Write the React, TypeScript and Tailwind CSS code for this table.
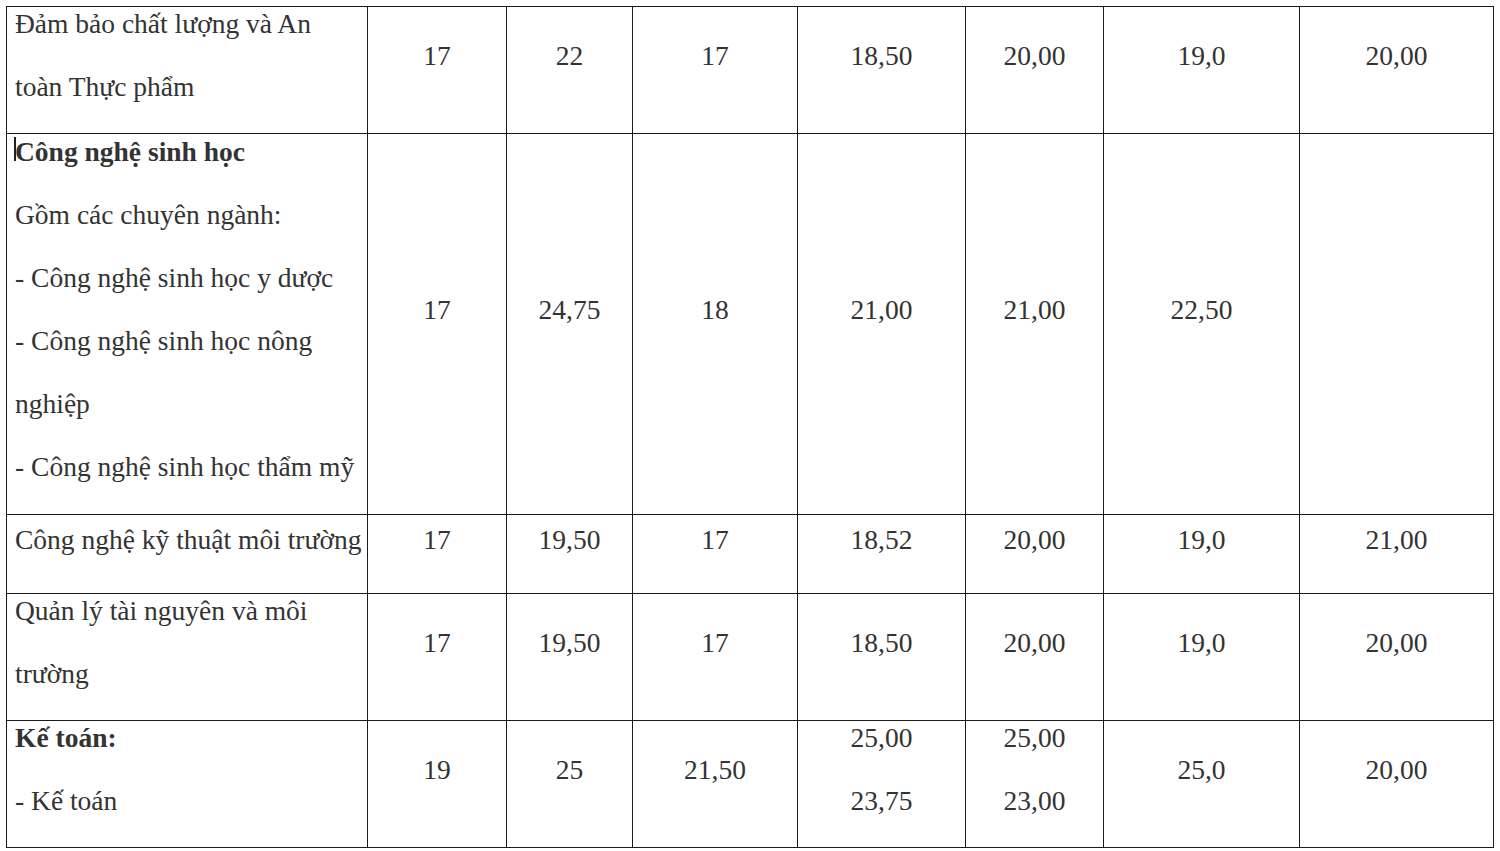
import React from "react";

type Row = {
  h: string;
  label: React.ReactNode;
  cells: React.ReactNode[];
};

const P = ({ children, bold }: { children: React.ReactNode; bold?: boolean }) => (
  <p className={`m-0 mb-[30px] h-[33px] leading-[33px] ${bold ? "font-bold" : ""}`}>{children}</p>
);

const Num = ({ v }: { v: string }) => <P>{v}</P>;

export default function App() {
  const rows: Row[] = [
    {
      h: "h-[125px]",
      label: (
        <>
          <P>Đảm bảo chất lượng và An</P>
          <P>toàn Thực phẩm</P>
        </>
      ),
      cells: ["17", "22", "17", "18,50", "20,00", "19,0", "20,00"].map((v, i) => <Num key={i} v={v} />),
    },
    {
      h: "h-[381px]",
      label: (
        <>
          <P bold>
            <span className="relative">
              <span className="absolute left-[-1px] top-[1px] h-[24px] w-[2px] bg-[#222]" />
              Công nghệ sinh học
            </span>
          </P>
          <P>Gồm các chuyên ngành:</P>
          <P>- Công nghệ sinh học y dược</P>
          <P>- Công nghệ sinh học nông</P>
          <P>nghiệp</P>
          <P>- Công nghệ sinh học thẩm mỹ</P>
        </>
      ),
      cells: [
        <Num key="a" v="17" />,
        <Num key="b" v="24,75" />,
        <Num key="c" v="18" />,
        <Num key="d" v="21,00" />,
        <Num key="e" v="21,00" />,
        <Num key="f" v="22,50" />,
        null,
      ],
    },
    {
      h: "h-[79px]",
      label: <P>Công nghệ kỹ thuật môi trường</P>,
      cells: ["17", "19,50", "17", "18,52", "20,00", "19,0", "21,00"].map((v, i) => <Num key={i} v={v} />),
    },
    {
      h: "h-[127px]",
      label: (
        <>
          <P>Quản lý tài nguyên và môi</P>
          <P>trường</P>
        </>
      ),
      cells: ["17", "19,50", "17", "18,50", "20,00", "19,0", "20,00"].map((v, i) => <Num key={i} v={v} />),
    },
    {
      h: "h-[127px]",
      label: (
        <>
          <P bold>Kế toán:</P>
          <P>- Kế toán</P>
        </>
      ),
      cells: [
        <Num key="a" v="19" />,
        <Num key="b" v="25" />,
        <Num key="c" v="21,50" />,
        <React.Fragment key="d">
          <P>25,00</P>
          <P>23,75</P>
        </React.Fragment>,
        <React.Fragment key="e">
          <P>25,00</P>
          <P>23,00</P>
        </React.Fragment>,
        <Num key="f" v="25,0" />,
        <Num key="g" v="20,00" />,
      ],
    },
  ];

  const widths = ["w-[361px]", "w-[139px]", "w-[126px]", "w-[165px]", "w-[168px]", "w-[138px]", "w-[196px]", "w-[194px]"];

  return (
    <div className="min-h-[851px] w-[1500px] bg-white pl-[6px] pt-[6px] [font-family:'Liberation_Serif','Times_New_Roman',serif] text-[27.5px] text-[#333]">
      <table className="w-[1488px] table-fixed border-collapse">
        <colgroup>
          {widths.map((w, i) => (
            <col key={i} className={w} />
          ))}
        </colgroup>
        <tbody>
          {rows.map((r, ri) => (
            <tr key={ri} className={r.h}>
              <td className="whitespace-nowrap border border-[#1a1a1a] p-0 pl-[8px] align-middle">{r.label}</td>
              {r.cells.map((c, ci) => (
                <td key={ci} className="border border-[#1a1a1a] p-0 text-center align-middle">
                  {c}
                </td>
              ))}
            </tr>
          ))}
        </tbody>
      </table>
    </div>
  );
}
